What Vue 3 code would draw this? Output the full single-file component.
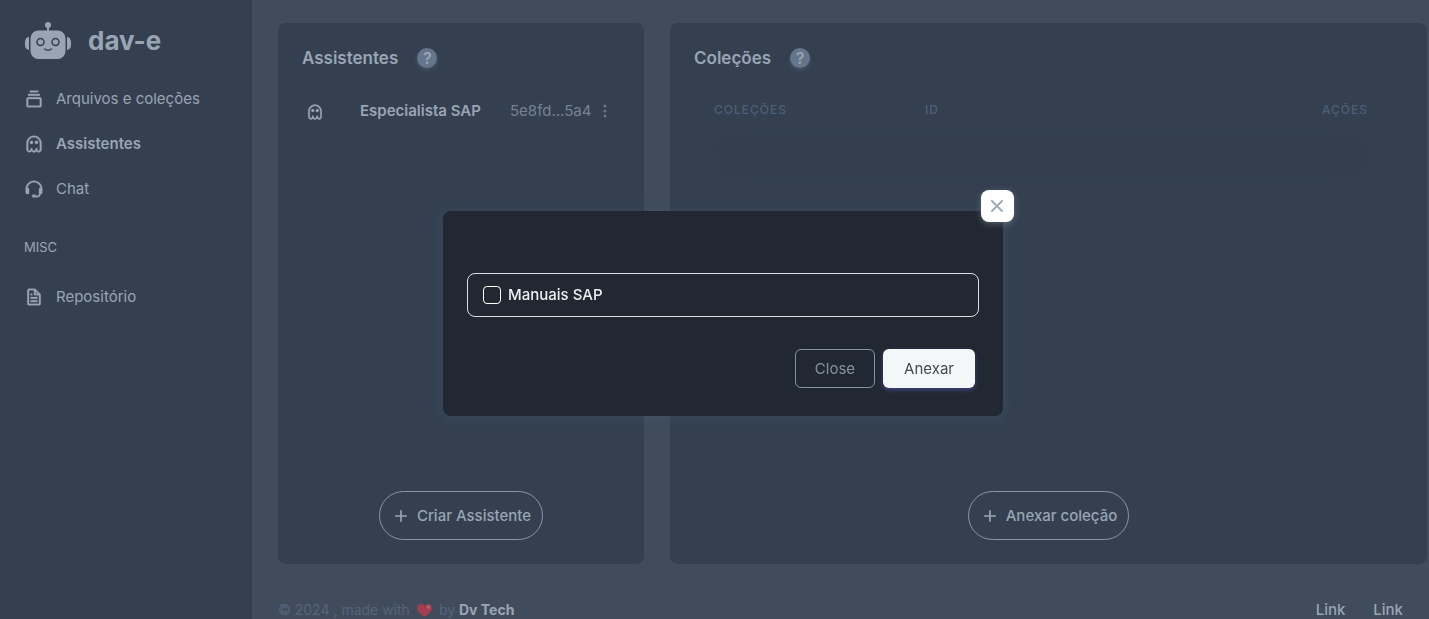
<script setup>
import { ref } from 'vue'

const icons = {
  collection: 'M19 10H5c-1.103 0-2 .897-2 2v8c0 1.103.897 2 2 2h14c1.103 0 2-.897 2-2v-8c0-1.103-.897-2-2-2zM5 20v-8h14l.002 8H5zM5 6h14v2H5zm2-4h10v2H7z',
  ghost: 'M12 2c-4.963 0-9 4.038-9 9v8h.051c.245 1.691 1.69 3 3.449 3 1.174 0 2.074-.417 2.672-1.174a3.99 3.99 0 0 0 5.668-.014c.601.762 1.504 1.188 2.66 1.188 1.93 0 3.5-1.57 3.5-3.5V11c0-4.962-4.037-9-9-9zm7 16.5c0 .827-.673 1.5-1.5 1.5-.449 0-1.5 0-1.5-2v-1h-2v1c0 1.103-.897 2-2 2s-2-.897-2-2v-1H8v1c0 1.845-.774 2-1.5 2-.827 0-1.500-.673-1.500-1.500V11c0-3.860 3.141-7 7-7s7 3.140 7 7v7.500zM9 8a2 2 0 1 0 0 4 2 2 0 0 0 0-4zm6 0a2 2 0 1 0 0 4 2 2 0 0 0 0-4z',
  support: 'M12 2C6.486 2 2 6.486 2 12v4.143C2 17.167 2.897 18 4 18h1a1 1 0 0 0 1-1v-5.143a1 1 0 0 0-1-1h-.908C4.648 6.987 7.978 4 12 4s7.352 2.987 7.908 6.857H19a1 1 0 0 0-1 1V18c0 1.103-.897 2-2 2h-2v-1h-4v3h6c2.206 0 4-1.794 4-4 1.103 0 2-.833 2-1.857V12c0-5.514-4.486-10-10-10z',
  file: 'M19.903 8.586a.997.997 0 0 0-.196-.293l-6-6a.997.997 0 0 0-.293-.196c-.03-.014-.062-.022-.094-.033a.991.991 0 0 0-.259-.051C13.04 2.011 13.021 2 13 2H6c-1.103 0-2 .897-2 2v16c0 1.103.897 2 2 2h12c1.103 0 2-.897 2-2V9c0-.021-.011-.04-.013-.062a.952.952 0 0 0-.051-.259c-.01-.032-.019-.063-.033-.093zM16.586 8H14V5.414L16.586 8zM6 20V4h6v5a1 1 0 0 0 1 1h5l.002 10H6zM8 12h8v2H8zm0 4h8v2H8zm0-8h2v2H8z',
  plus: 'M19 11h-6V5h-2v6H5v2h6v6h2v-6h6z',
}
const menu = [
  { label: 'Arquivos e coleções', icon: 'collection' },
  { label: 'Assistentes', icon: 'ghost', active: true },
  { label: 'Chat', icon: 'support' },
]
const open = ref(true)
const attachManuals = ref(false)
</script>

<template>
  <div class="layout">
    <aside class="sidebar">
      <a class="brand" href="#">
        <svg class="robot" viewBox="0 0 48 38" aria-hidden="true">
          <circle cx="24" cy="3" r="3" />
          <path d="M23 5h2v5h-2zM5 15v13a4 5 0 0 1-4-5v-3a4 5 0 0 1 4-5zM43 15v13a4 5 0 0 0 4-5v-3a4 5 0 0 0-4-5z" />
          <rect x="6.500" y="8.500" width="35" height="28.500" rx="8" />
          <g class="face">
            <circle cx="16.500" cy="20" r="3.500" />
            <circle cx="31.500" cy="20" r="3.500" />
            <path d="M20.500 27q3.500 2.500 7 0" />
          </g>
        </svg>
        <span>dav-e</span>
      </a>
      <nav>
        <a v-for="item in menu" :key="item.label" href="#" class="menu-link" :class="{ active: item.active }">
          <svg class="icon" viewBox="0 0 24 24" aria-hidden="true"><path :d="icons[item.icon]" /></svg>
          {{ item.label }}
        </a>
        <div class="menu-header">MISC</div>
        <a href="#" class="menu-link">
          <svg class="icon" viewBox="0 0 24 24" aria-hidden="true"><path :d="icons.file" /></svg>
          Repositório
        </a>
      </nav>
    </aside>

    <div class="page">
      <main class="panels">
        <section class="panel">
          <header class="panel-head">
            <h2>Assistentes</h2>
            <button type="button" class="help" aria-label="Ajuda sobre assistentes">?</button>
          </header>
          <div class="assistant">
            <svg class="ghost" viewBox="0 0 24 24" aria-hidden="true"><path :d="icons.ghost" /></svg>
            <strong>Especialista SAP</strong>
            <span class="code">5e8fd...5a4</span>
            <button type="button" class="dots" aria-label="Mais opções">
              <svg viewBox="0 0 4 14" aria-hidden="true"><circle cx="2" cy="2" r="1.500" /><circle cx="2" cy="7" r="1.500" /><circle cx="2" cy="12" r="1.500" /></svg>
            </button>
          </div>
          <button type="button" class="pill">
            <svg class="icon" viewBox="0 0 24 24" aria-hidden="true"><path :d="icons.plus" /></svg>
            Criar Assistente
          </button>
        </section>

        <section class="panel">
          <header class="panel-head">
            <h2>Coleções</h2>
            <button type="button" class="help" aria-label="Ajuda sobre coleções">?</button>
          </header>
          <div class="table-wrap">
            <table>
              <thead>
                <tr><th class="name">COLEÇÕES</th><th>ID</th><th class="actions">AÇÕES</th></tr>
              </thead>
              <tbody>
                <tr><td colspan="3"><div class="smudge"></div></td></tr>
              </tbody>
            </table>
          </div>
          <button type="button" class="pill">
            <svg class="icon" viewBox="0 0 24 24" aria-hidden="true"><path :d="icons.plus" /></svg>
            Anexar coleção
          </button>
        </section>
      </main>

      <footer class="footer">
        <div class="credit">
          <span>© 2024 , made with</span>
          <svg class="heart" viewBox="0 0 16 14" aria-hidden="true">
            <path d="M8 14C6 12 0 8.500 0 4.200 0 1.600 1.800 0 4 0c1.800 0 3.200.9 4 2.300C8.800.9 10.200 0 12 0c2.200 0 4 1.600 4 4.200C16 8.500 10 12 8 14z" />
            <ellipse cx="12.300" cy="3.200" rx="1.300" ry="2" transform="rotate(25 12.300 3.200)" />
          </svg>
          <span>by <a href="#">Dv Tech</a></span>
        </div>
        <div class="links"><a href="#">Link</a><a href="#">Link</a></div>
      </footer>
    </div>

    <div v-if="open" class="overlay">
      <div class="modal" role="dialog" aria-modal="true" aria-label="Anexar coleção">
        <button type="button" class="close" aria-label="Fechar" @click="open = false">
          <svg viewBox="0 0 13 12" aria-hidden="true"><path d="M1 1l10 10M11 1L1 11" /></svg>
        </button>
        <label class="option">
          <input v-model="attachManuals" type="checkbox" />
          Manuais SAP
        </label>
        <div class="modal-actions">
          <button type="button" class="btn outline" @click="open = false">Close</button>
          <button type="button" class="btn primary">Anexar</button>
        </div>
      </div>
    </div>
  </div>
</template>

<style>
body {
  margin: 0;
  overflow: hidden;
  background: #404c5c;
}
</style>

<style scoped>
* {
  box-sizing: border-box;
}
.layout {
  display: flex;
  height: 100vh;
  font: 15px/22px Inter, "Liberation Sans", sans-serif;
  color: #99a5b3;
}
a {
  color: inherit;
  text-decoration: none;
}
button {
  font: inherit;
  color: inherit;
  cursor: pointer;
  padding: 0;
  border: 0;
  background: none;
}
svg {
  fill: currentColor;
  flex: none;
}
.sidebar {
  width: 252px;
  flex: none;
  padding: 20px 24px;
  background: #344050;
}
.brand {
  display: flex;
  align-items: center;
  gap: 16px;
  height: 42px;
  font-size: 26px;
  font-weight: 700;
}
.robot {
  width: 48px;
  height: 38px;
}
.face {
  fill: none;
  stroke: #344050;
  stroke-width: 1.5;
  stroke-linecap: round;
}
nav {
  padding-top: 14px;
}
.menu-link {
  display: flex;
  align-items: center;
  gap: 12px;
  height: 45px;
}
.menu-link.active {
  font-weight: 600;
}
.icon {
  width: 20px;
  height: 20px;
}
.menu-link .icon,
.ghost {
  margin-top: 1px;
  stroke: currentColor;
  stroke-width: 0.4;
}
.menu-header {
  padding: 25px 0 16px;
  font-size: 13px;
}
.page {
  flex: 1;
  min-width: 0;
  padding: 23px 2px 0 26px;
}
.panels {
  display: grid;
  grid-template-columns: 366fr 757fr;
  gap: 26px;
  height: calc(100vh - 78px);
}
.panel {
  display: flex;
  flex-direction: column;
  min-width: 0;
  padding: 24px;
  border-radius: 8px;
  background: #344050;
}
.panel-head {
  display: flex;
  align-items: center;
  gap: 19px;
  padding-bottom: 19px;
}
h2 {
  margin: 0;
  font-size: 17px;
  line-height: 20px;
  font-weight: 600;
}
.help {
  width: 20px;
  height: 20px;
  margin-top: 1px;
  border-radius: 50%;
  background: #65758c;
  box-shadow: 0 2px 4px rgb(101 117 140 / 40%);
  font-size: 16px;
  line-height: 20px;
  font-weight: 600;
}
.assistant {
  display: flex;
  align-items: center;
  height: 48px;
  padding-left: 4px;
}
.ghost {
  width: 18px;
  height: 18px;
  margin-right: 36px;
}
.assistant strong {
  width: 150px;
  font-weight: 600;
}
.code {
  color: #748295;
}
.dots {
  display: flex;
  margin-left: 12px;
  color: #65758c;
}
.dots svg {
  width: 4px;
  height: 14px;
}
.pill {
  display: flex;
  align-items: center;
  align-self: center;
  gap: 6px;
  height: 49px;
  margin-top: auto;
  padding: 0 11px;
  border: 1px solid #8996a5;
  border-radius: 25px;
  font-weight: 500;
}
.table-wrap {
  padding-right: 15px;
}
table {
  width: 100%;
  border-collapse: collapse;
}
th {
  height: 46px;
  padding: 0 20px;
  font-size: 12px;
  font-weight: 500;
  letter-spacing: 1px;
  text-align: left;
  color: #4b5f7a;
}
th.name {
  width: 211px;
}
th.actions {
  text-align: right;
}
td {
  padding: 0 20px;
}
.smudge {
  height: 46px;
  border-radius: 23px;
  background: #333f4f;
  filter: blur(3px);
}
.footer {
  display: flex;
  justify-content: space-between;
  padding: 35px 24px 24px 0;
}
.credit {
  display: flex;
  align-items: center;
  gap: 7px;
  font-size: 14px;
  color: #54657d;
}
.heart {
  width: 15px;
  height: 13px;
  fill: #a23e4e;
}
.heart ellipse {
  fill: #b2707a;
}
.credit a {
  font-weight: 700;
  color: #99a5b3;
}
.links {
  display: flex;
  gap: 28px;
  font-weight: 500;
}
.overlay {
  position: fixed;
  inset: 0;
  display: flex;
  align-items: center;
  justify-content: center;
  padding: 8px 0 0 17px;
}
.modal {
  position: relative;
  width: 560px;
  padding: 62px 24px 28px;
  border-radius: 8px;
  background: #222831;
  box-shadow: 0 2px 16px rgb(67 95 125 / 35%);
}
.close {
  position: absolute;
  top: -21px;
  right: -11px;
  display: grid;
  place-items: center;
  width: 33px;
  height: 32px;
  border-radius: 8px;
  background: #fff;
  box-shadow: 0 2px 6px rgb(161 172 184 / 40%);
}
.close svg {
  width: 13px;
  height: 12px;
  stroke: #a1acb8;
  stroke-width: 2;
  stroke-linecap: round;
}
.option {
  display: flex;
  align-items: center;
  gap: 7px;
  height: 44px;
  padding: 0 15px;
  border: 1px solid #d9dee3;
  border-radius: 8px;
  font-weight: 500;
  color: #eceff1;
}
.option input {
  appearance: none;
  width: 18px;
  height: 18px;
  margin: 0;
  border: 1px solid #fff;
  border-radius: 4px;
}
.option input:checked {
  background: #99a5b3;
}
.modal-actions {
  display: flex;
  justify-content: flex-end;
  gap: 8px;
  padding: 32px 4px 0;
}
.btn {
  height: 39px;
  padding: 0 21px;
  border-radius: 6px;
}
.outline {
  padding: 0 19px;
  border: 1px solid #8592a3;
  color: #8592a3;
}
.primary {
  background: #f4f7f8;
  color: #434a54;
  box-shadow: 0 2px 4px rgb(105 108 255 / 40%);
}
</style>
